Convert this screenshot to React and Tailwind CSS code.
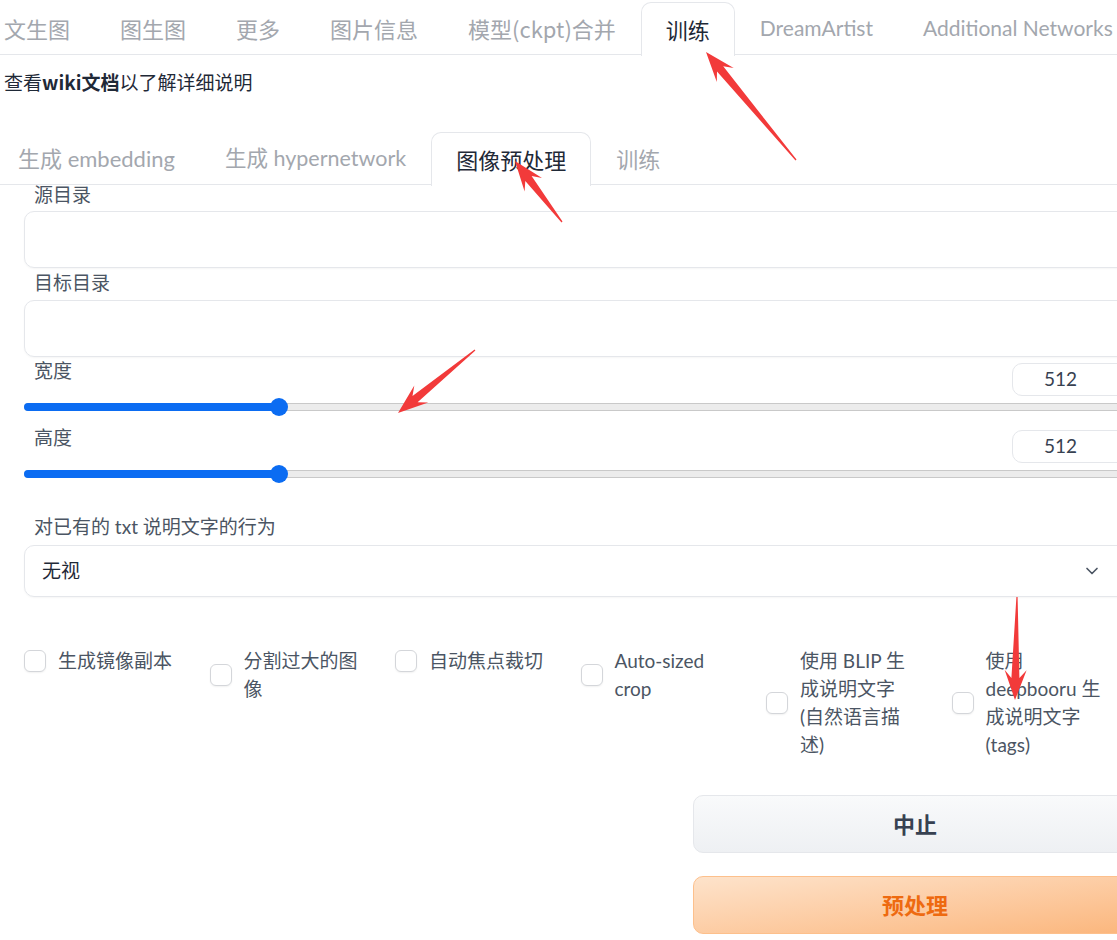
import { ChevronDown } from 'lucide-react';

const CJK = '"Noto Sans CJK SC", "Noto Sans", sans-serif';
const LATIN = 'Lato, "Noto Sans CJK SC", sans-serif';

const topTabs = [
    { t: '文生图' },
    { t: '图生图' },
    { t: '更多' },
    { t: '图片信息' },
    { t: '模型(ckpt)合并' },
    { t: '训练' },
    { t: 'DreamArtist', latin: true, size: 'text-[21px]' },
    { t: 'Additional Networks', latin: true, size: 'text-[21px]' },
];
const subTabs = [
    { t: '生成 embedding', latin: true },
    { t: '生成 hypernetwork', latin: true, size: 'text-[21.5px]' },
    { t: '图像预处理' },
    { t: '训练' },
];

const checks = [
    { label: '生成镜像副本' },
    { label: '分割过大的图像' },
    { label: '自动焦点裁切' },
    { label: 'Auto-sized crop' },
    { label: '使用 BLIP 生成说明文字(自然语言描述)' },
    { label: '使用 deepbooru 生成说明文字(tags)' },
];

const arrows = [
    [796, 160, 706, 52],
    [562, 222, 515, 161],
    [475, 350, 398, 413],
    [1017, 597, 1015, 700],
];

function arrowPoints([x1, y1, x2, y2]) {
    const len = Math.hypot(x2 - x1, y2 - y1);
    const dx = (x2 - x1) / len;
    const dy = (y2 - y1) / len;
    const nx = -dy;
    const ny = dx;
    const L = 30, W = 11, neckW = 4, neck = 22;
    const p = (bx, by, along, side) => [bx + dx * along + nx * side, by + dy * along + ny * side];
    const pts = [
        p(x1, y1, 0, 0.6),
        p(x2, y2, -neck, neckW),
        p(x2, y2, -L, W),
        [x2, y2],
        p(x2, y2, -L, -W),
        p(x2, y2, -neck, -neckW),
        p(x1, y1, 0, -0.6),
    ];
    return pts.map((q) => q.map((v) => v.toFixed(1)).join(',')).join(' ');
}

function Tabs({ items, active, className }) {
    return (
        <div className={`flex h-[53px] border-b border-[#e5e7eb] ${className}`}>
            {items.map((tab, i) => (
                <div
                    key={i}
                    style={{ fontFamily: tab.latin ? LATIN : CJK }}
                    className={
                        i === active
                            ? 'px-[24px] flex items-center text-[22px] text-[#1f2937] bg-white border border-b-0 border-[#e5e7eb] rounded-t-[10px] mb-[-1px] h-[54px] shrink-0'
                            : `px-[25px] flex items-center text-[#a3a7ae] shrink-0 whitespace-nowrap ${tab.size || 'text-[22px]'}`
                    }
                >
                    {tab.t}
                </div>
            ))}
        </div>
    );
}

function Slider() {
    return (
        <div className="relative h-[18px] mt-[2px]">
            <div className="absolute left-0 right-0 top-[5px] h-[8px] bg-[#ececec] border border-[#c9c9c9] rounded-full" />
            <div className="absolute left-0 w-[255px] top-[5px] h-[8px] bg-[#0b6cf2] rounded-full" />
            <div className="absolute left-[246px] top-0 w-[18px] h-[18px] rounded-full bg-[#0b6cf2]" />
        </div>
    );
}

function NumberRow({ label, mt }) {
    return (
        <div className={`flex justify-between items-start ${mt}`}>
            <div className="pl-[10px] leading-[20px] text-[#4b5563]">{label}</div>
            <div className="mt-[2px] w-[125px] h-[33px] border border-[#e5e7eb] rounded-[10px] pl-[31px] flex items-center text-[19px] text-[#374151]">
                512
            </div>
        </div>
    );
}

export default function App() {
    return (
        <div
            className="relative w-[1117px] h-[940px] overflow-hidden bg-white text-[19px]"
            style={{ fontFamily: LATIN }}
        >
            <div className="w-[1180px]">
                <Tabs items={topTabs} active={5} className="ml-[-21px] mt-[2px]" />

                <div className="mt-[13px] ml-[4px] text-[19px] leading-[27px] text-[#1f2937]" style={{ fontFamily: CJK }}>
                    查看<b>wiki文档</b>以了解详细说明
                </div>

                <Tabs items={subTabs} active={2} className="ml-[-7px] mt-[37px]" />

                <div className="ml-[24px] w-[1113px] flex flex-col">
                    <div className="pl-[10px] leading-[20px] text-[#4b5563]">源目录</div>
                    <div className="mt-[6px] h-[57px] border border-[#e5e7eb] rounded-[10px] shadow-[0_1px_2px_rgba(0,0,0,0.04)]" />

                    <div className="mt-[5px] pl-[10px] leading-[20px] text-[#4b5563]">目标目录</div>
                    <div className="mt-[7px] h-[57px] border border-[#e5e7eb] rounded-[10px] shadow-[0_1px_2px_rgba(0,0,0,0.04)]" />

                    <NumberRow label="宽度" mt="mt-[4px]" />
                    <Slider />
                    <NumberRow label="高度" mt="mt-[12px]" />
                    <Slider />

                    <div className="mt-[34px] pl-[10px] leading-[20px] text-[#4b5563]">对已有的 txt 说明文字的行为</div>
                    <div className="mt-[8px] h-[52px] border border-[#e5e7eb] rounded-[10px] flex items-center justify-between pl-[17px] pr-[34px] text-[#1f2937] shadow-[0_1px_2px_rgba(0,0,0,0.04)]">
                        <span>无视</span>
                        <ChevronDown className="w-[20px] h-[20px] text-[#4b5563]" strokeWidth={2} />
                    </div>

                    <div className="mt-[50px] flex items-start">
                        {checks.map((c, i) => (
                            <div key={i} className="w-[189px] flex items-center gap-[12px]">
                                <div className="w-[22px] h-[22px] shrink-0 border border-[#d4d6da] rounded-[6px] bg-white shadow-[0_1px_2px_rgba(0,0,0,0.06)]" />
                                <div className="w-[119px] leading-[28px] text-[19px] text-[#4b5563]">{c.label}</div>
                            </div>
                        ))}
                    </div>

                    <div className="mt-[36px] flex flex-col items-end gap-[23px]">
                        <button className="w-[444px] h-[58px] rounded-[10px] border border-[#e5e7eb] bg-gradient-to-b from-[#f9fafb] to-[#eef0f3] text-[22px] font-bold text-[#374151]">
                            中止
                        </button>
                        <button className="w-[444px] h-[58px] rounded-[10px] border border-[#fdc08c] bg-gradient-to-br from-[#fde3cb] to-[#fbb67c] text-[22px] font-bold text-[#ee6a10]">
                            预处理
                        </button>
                    </div>
                </div>
            </div>

            <svg className="absolute inset-0 pointer-events-none" width="1117" height="940">
                {arrows.map((a, i) => (
                    <polygon key={i} points={arrowPoints(a)} fill="#f23a3a" />
                ))}
            </svg>
        </div>
    );
}
